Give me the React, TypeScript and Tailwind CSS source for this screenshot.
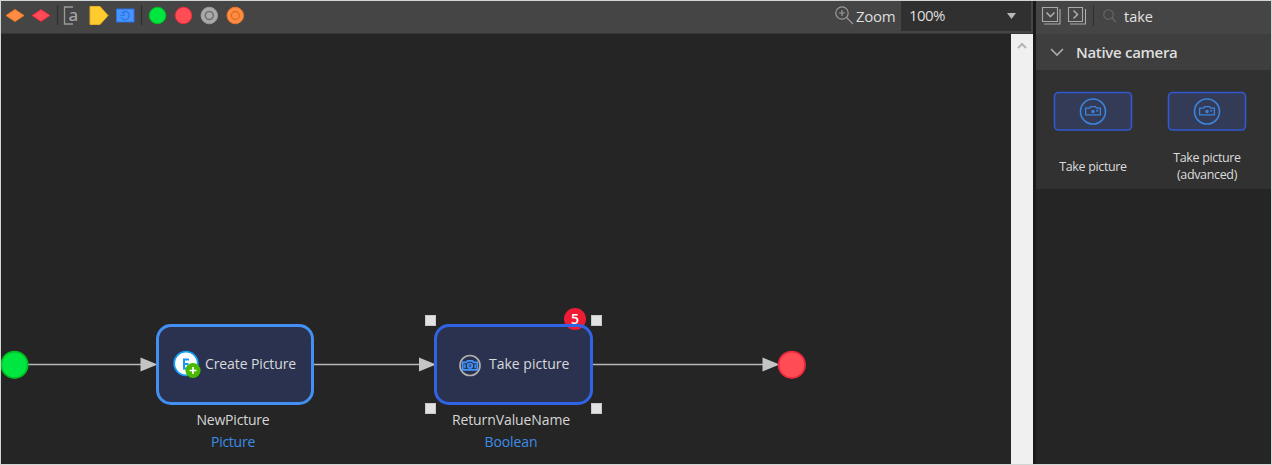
import type { ReactNode } from "react";

function Camera({ x, y, w, color, filled }: { x: number; y: number; w: number; color: string; filled?: boolean }) {
  return (
    <svg x={x} y={y} width={w} height={w * 0.7} viewBox="0 0 16 11" fill="none" stroke={color} strokeWidth={filled ? 1.8 : 1.3} overflow="visible">
      {filled ? (
        <>
          <path d="M.2 2.500h3.800L5.500.8h5L12 2.500h3.800v7.900H.2z" />
          <circle cx="8" cy="6" r="2.400" />
          <circle cx="8" cy="6" r=".8" fill={color} stroke="none" />
          <path d="M2.500 4.300v4.500M13.500 4.300v4.500" strokeWidth="1.500" />
        </>
      ) : (
        <>
          <path d="M.6 3h4l1-1.500h5L11.600 3h3.800v6.700H.6z" />
          <circle cx="8" cy="6.300" r="1.100" fill={color} />
          <path d="M11.200 5.600h2" strokeWidth="1.600" />
        </>
      )}
    </svg>
  );
}

function ToolbarIcons() {
  return (
    <svg className="block h-[33px] w-[260px]" viewBox="1 1 260 33" fill="none">
      <path d="M6 15.5 15 9.500l9 6-9 6z" fill="#ff8c42" stroke="#e67725" />
      <path d="M32 15.5 41 9.500l9 6-9 6z" fill="#ff4a57" stroke="#e52a3c" />
      <path d="M57.5 5v20M141.5 5v20" stroke="#303030" strokeWidth="1.3" />
      <path d="M73 7h-8.5v17H73" stroke="#999" strokeWidth="1.3" />
      <text x="68.5" y="21" fontSize="17" fontWeight="500" fill="#a3a3a3" fontFamily="Noto Sans, sans-serif">a</text>
      <path d="M90 6.500h10l8 9-8 9H90z" fill="#ffcb2e" stroke="#e6b020" />
      <path d="M116.500 9h17.500v13h-17.500z" fill="#4795ff" stroke="#2e70e6" />
      <path d="M121.500 13.300a4.200 4.200 0 1 1-.3 3.900M120.500 15.500h3.500v-3" stroke="#2f73e0" strokeWidth="1.200" />
      <circle cx="157.500" cy="15.500" r="8.300" fill="#00e640" stroke="#00bd22" />
      <circle cx="183.500" cy="15.500" r="8.300" fill="#ff4c55" stroke="#e9293c" />
      <circle cx="209.300" cy="15.500" r="8.300" fill="#aaa" stroke="#999" />
      <circle cx="209.300" cy="15.500" r="4" stroke="#707070" strokeWidth="1.600" />
      <circle cx="235.300" cy="15.500" r="8.300" fill="#ff8c42" stroke="#e67728" />
      <circle cx="235.300" cy="15.500" r="4" stroke="#df6d20" strokeWidth="1.300" />
    </svg>
  );
}

function Toolbar() {
  return (
    <div className="flex h-[33px] justify-between border-b border-[#363636] bg-[#454545]">
      <ToolbarIcons />
      <div className="flex">
        <svg className="mt-1 h-6 w-[22px]" viewBox="0 0 22 24" fill="none" stroke="#999" strokeWidth="1.200">
          <circle cx="8" cy="8" r="6.200" />
          <path d="M5 8h6M8 5v6M12.500 12.500l6.500 6.500" />
        </svg>
        <span className="w-[45px] pt-[5px] text-[15px] leading-[20px] font-medium tracking-[-0.3px] text-[#dedede]">Zoom</span>
        <div className="flex h-[30px] w-[130px] justify-between bg-[#303030] pr-[15px] pl-[8px]">
          <span className="pt-[4px] text-[15px] leading-[20px] font-medium tracking-[-0.6px] text-[#dedede]">100%</span>
          <svg className="mt-[12px] h-[6px] w-[9px]" viewBox="0 0 9 6"><path d="M0 0h9L4.500 6z" fill="#b8b8b8" /></svg>
        </div>
        <div className="w-[2px]" />
      </div>
    </div>
  );
}

function Node({ className, children }: { className: string; children: ReactNode }) {
  return <div className={`absolute flex h-[81px] items-center bg-[#2a3250] text-[14px] text-[#d9d9d9] ${className}`}>{children}</div>;
}

function Handle({ className }: { className: string }) {
  return <div className={`absolute size-[11px] border border-[#c8c8c8] bg-[#e2e2e2] ${className}`} />;
}

function Canvas() {
  return (
    <div className="relative min-w-0 flex-1 overflow-hidden bg-[#252525]">
      <svg className="absolute inset-0 h-[430px] w-[1010px]" viewBox="1 34 1010 430">
        <path d="M28 364.500h118M314 364.500h109M592 364.500h174" stroke="#b8b8b8" strokeWidth="1.600" />
        <path d="M140.500 357.500v14l17-7zM419 357.500v14l17-7zM762.500 357.500v14l17-7z" fill="#c4c4c4" />
        <circle cx="14.500" cy="364.800" r="13.200" fill="#00e640" stroke="#00bd22" strokeWidth="1.800" />
        <circle cx="791.800" cy="364.800" r="13.200" fill="#ff4c55" stroke="#e9293c" strokeWidth="1.800" />
      </svg>

      <Node className="left-[155px] top-[290px] w-[158px] rounded-[15px] border-[3px] border-[#4291f2]">
        <svg className="ml-[13px] size-[30px] shrink-0" viewBox="171 349 30 30">
          <circle cx="185" cy="362.500" r="11.800" fill="#fff" stroke="#159cf5" strokeWidth="1.800" />
          <path d="M188 358.500h-5v9h5M183 363h4.500" fill="none" stroke="#1599f5" strokeWidth="2" />
          <circle cx="192" cy="369.500" r="7.600" fill="#48b900" />
          <path d="M188.500 369.500h7M192 366v7" stroke="#fff" strokeWidth="1.700" />
        </svg>
        <span className="ml-[3px] whitespace-nowrap pb-[2px] tracking-[-0.1px]">Create Picture</span>
      </Node>
      <div className="absolute left-[155px] top-[375px] w-[154px] text-center text-[14px] leading-[22px]">
        <div className="tracking-[-0.2px] text-[#d6d6d6]">NewPicture</div>
        <div className="tracking-[-0.25px] text-[#3b8de8]">Picture</div>
      </div>

      <Node className="left-[433px] top-[290px] w-[159px] rounded-[15px]">
        <svg className="ml-[22px] size-[28px] shrink-0" viewBox="456 350 28 28">
          <circle cx="470" cy="364.500" r="10" fill="none" stroke="#b0b0b0" strokeWidth="1.700" />
          <Camera x={462.500} y={359} w={15} color="#4395ff" filled />
        </svg>
        <span className="ml-[5px] whitespace-nowrap pb-[2px] tracking-[0px]">Take picture</span>
      </Node>
      <div className="absolute left-[563px] top-[274px] flex size-[22px] items-center justify-center rounded-full bg-[#ed1c34] pb-px text-[14px] font-semibold text-white">5</div>
      <div className="absolute left-[433px] top-[290px] h-[81px] w-[159px] rounded-[15px] border-[3.500px] border-[#3164e4]" />
      <Handle className="left-[424px] top-[281px]" />
      <Handle className="left-[590px] top-[281px]" />
      <Handle className="left-[424px] top-[369px]" />
      <Handle className="left-[590px] top-[369px]" />
      <div className="absolute left-[431px] top-[375px] w-[158px] text-center text-[14px] leading-[22px]">
        <div className="tracking-[-0.1px] text-[#d6d6d6]">ReturnValueName</div>
        <div className="tracking-[-0.1px] text-[#3b8de8]">Boolean</div>
      </div>
    </div>
  );
}

function Tool({ children }: { children: ReactNode }) {
  return (
    <div className="flex w-[114px] flex-col items-center text-[#dcdcdc]">
      <svg className="h-[40px] w-[80px]" viewBox="0 0 80 40" fill="none">
        <rect x="1.500" y="1.500" width="77" height="37.500" rx="4" fill="#333b57" stroke="#3059cf" strokeWidth="1.600" />
        <circle cx="40" cy="20.500" r="12.500" stroke="#3d83dc" strokeWidth="1.600" />
        <Camera x={32} y={14} w={16} color="#3d83dc" />
      </svg>
      <div className="mt-[17px] flex h-[36px] items-center text-center text-[12.500px] leading-[17px] font-medium tracking-[-0.350px]">{children}</div>
    </div>
  );
}

function Toolbox() {
  return (
    <aside className="w-[235px] bg-[#252525]">
      <div className="flex h-[33px] bg-[#454545]">
        <svg className="h-[33px] w-[84px]" viewBox="1036 1 84 33" fill="none" stroke="#aaa" strokeWidth="1.100">
          <path d="M1042.500 7.500h15v14h-15zM1044 24h16V9M1068.500 7.500h14v14h-14zM1070 24h15.500V9" />
          <path d="m1046.500 12.500 4 4 4-4M1073.500 10.500l4 4-4 4" strokeWidth="1.600" />
          <path d="M1093.500 5v21" stroke="#303030" />
          <circle cx="1108.500" cy="14.500" r="4.800" stroke="#686868" />
          <path d="m1112 18 4 4" stroke="#686868" />
        </svg>
        <span className="ml-[4px] pt-[6px] text-[14.500px] leading-[20px] font-medium text-[#e2e2e2]">take</span>
      </div>
      <div className="flex h-[36px] items-center bg-[#3e3e3e]">
        <svg className="ml-[14px] h-[9px] w-[14px]" viewBox="0 0 14 9" fill="none" stroke="#aaa" strokeWidth="1.700"><path d="m1 1 6 6 6-6" /></svg>
        <span className="ml-[12px] text-[15px] font-semibold tracking-[-0.300px] text-[#dedede]">Native camera</span>
      </div>
      <div className="flex h-[119px] bg-[#313131] pt-[21px]">
        <Tool>Take picture</Tool>
        <Tool>Take picture<br />(advanced)</Tool>
      </div>
    </aside>
  );
}

export default function App() {
  return (
    <main className="flex h-[465px] w-[1272px] overflow-hidden border border-[#d0d6d3] bg-[#1b1b1b] font-['Open_Sans','Noto_Sans',sans-serif]">
      <section className="flex w-[1032px] flex-col">
        <Toolbar />
        <div className="flex min-h-0 flex-1">
          <Canvas />
          <div className="flex w-[22px] justify-center bg-[#f0f0f0] pt-[8px]">
            <svg className="h-[8px] w-[10px]" viewBox="0 0 10 8" fill="none" stroke="#b5b5b5" strokeWidth="2"><path d="m1 6 4-4 4 4" /></svg>
          </div>
        </div>
      </section>
      <div className="w-[3px] bg-[#1a1a1a]" />
      <Toolbox />
    </main>
  );
}
